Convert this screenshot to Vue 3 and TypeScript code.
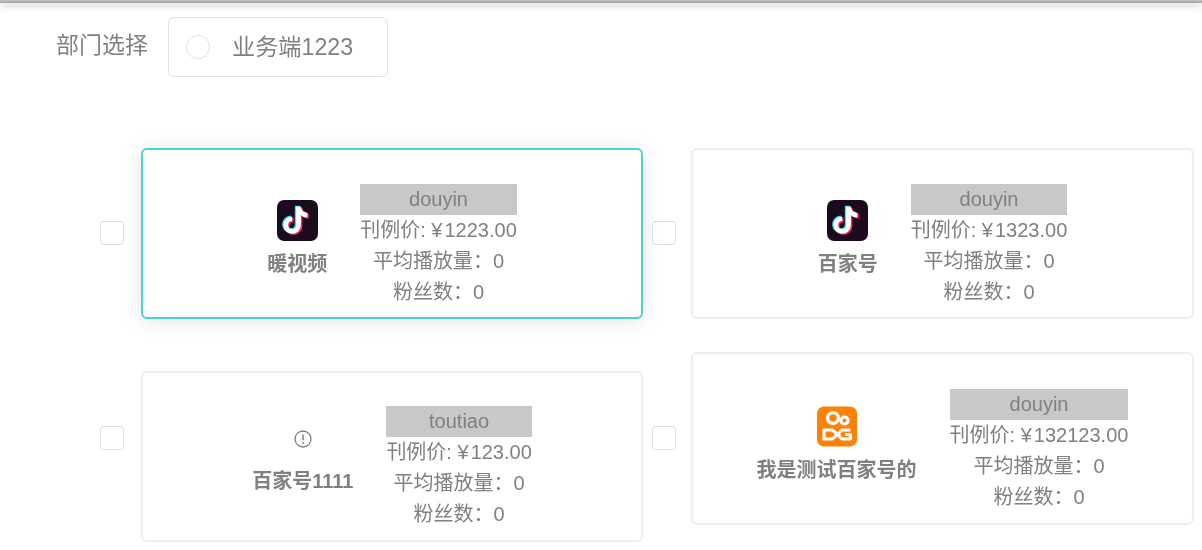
<script setup lang="ts">
interface Channel {
  id: number
  name: string
  platform: string
  price: string
  icon: 'tiktok' | 'kuaishou' | 'broken'
  selected?: boolean
}

const channels: Channel[] = [
  { id: 1, name: '暖视频', platform: 'douyin', price: '1223.00', icon: 'tiktok', selected: true },
  { id: 2, name: '百家号', platform: 'douyin', price: '1323.00', icon: 'tiktok' },
  { id: 3, name: '百家号1111', platform: 'toutiao', price: '123.00', icon: 'broken' },
  { id: 4, name: '我是测试百家号的', platform: 'douyin', price: '132123.00', icon: 'kuaishou' },
]
</script>

<template>
  <div class="page">
    <div class="topbar"></div>
    <div class="dept">
      <span class="dept-label">部门选择</span>
      <div class="dept-box">
        <span class="radio"></span>
        <span class="dept-name">业务端1223</span>
      </div>
    </div>
    <div class="grid">
      <div v-for="c in channels" :key="c.id" class="cell" :class="`cell-${c.id}`">
        <span class="check"></span>
        <div class="card" :class="{ selected: c.selected }">
          <div class="who">
            <div class="logo" :class="{ 'logo-broken': c.icon === 'broken' }">
              <svg v-if="c.icon === 'tiktok'" viewBox="0 0 40 40" width="41" height="41">
                <rect width="40" height="40" rx="7" fill="#1c0a1e" />
                <g fill="none" stroke-width="4.6">
                  <path d="M21 6.5v18a6.2 6.2 0 1 1-6.2-6.2M21 6.5c.4 4.6 3.8 8 8.6 8.4" stroke="#25f0ea" transform="translate(-1.3 -.8)" />
                  <path d="M21 6.5v18a6.2 6.2 0 1 1-6.2-6.2M21 6.5c.4 4.6 3.8 8 8.6 8.4" stroke="#fb2c55" transform="translate(1.4 1)" />
                  <path d="M21 6.5v18a6.2 6.2 0 1 1-6.2-6.2M21 6.5c.4 4.6 3.8 8 8.6 8.4" stroke="#fff" />
                </g>
              </svg>
              <svg v-else-if="c.icon === 'kuaishou'" viewBox="0 0 40 40" width="40" height="41">
                <rect width="40" height="40" rx="7" fill="#ff8105" />
                <g fill="none" stroke="#fff">
                  <circle cx="16" cy="11.5" r="5.4" stroke-width="3.4" />
                  <circle cx="27.5" cy="14" r="3.6" stroke-width="3" />
                  <path d="M7 23.5h8l4 3v3l-4 3H7z" stroke-width="3.2" stroke-linejoin="round" />
                  <path d="M33.5 23.5H25l-3 3v3l3 3h8.5V28H28" stroke-width="3" stroke-linejoin="round" />
                </g>
              </svg>
              <svg v-else viewBox="0 0 18 18" width="18" height="18">
                <circle cx="9" cy="9" r="8" fill="none" stroke="#808080" stroke-width="1.3" />
                <path d="M9 4.4v5.8M9 12v1.7" stroke="#808080" stroke-width="1.5" fill="none" />
              </svg>
            </div>
            <div class="name">{{ c.name }}</div>
          </div>
          <div class="info">
            <div class="platform">{{ c.platform }}</div>
            <div class="line">刊例价: <span class="yen">¥</span>{{ c.price }}</div>
            <div class="line">平均播放量：0</div>
            <div class="line">粉丝数：0</div>
          </div>
        </div>
      </div>
    </div>
  </div>
</template>

<style>
html, body { margin: 0; background: #fff; }
</style>

<style scoped>
.page {
  width: 1202px;
  height: 550px;
  overflow: hidden;
  position: relative;
  background: #fff;
  color: #808080;
  font-family: "Liberation Sans", "Noto Sans CJK SC", sans-serif;
  filter: blur(0.35px);
}
.topbar {
  height: 3px;
  background: linear-gradient(#c4c4c4, #a0a0a0);
  box-shadow: 0 2px 8px rgba(0, 0, 0, 0.3);
}
.dept {
  display: flex;
  align-items: flex-start;
  margin-top: 14px;
  padding-left: 56px;
}
.dept-label {
  width: 112px;
  font-size: 23px;
  line-height: 56px;
}
.dept-box {
  box-sizing: border-box;
  width: 220px;
  height: 60px;
  display: flex;
  align-items: center;
  padding-left: 17px;
  border: 1px solid #dfe2ee;
  border-radius: 6px;
}
.radio {
  box-sizing: border-box;
  width: 24px;
  height: 24px;
  border: 1px solid #dcdfee;
  border-radius: 50%;
}
.dept-name {
  margin-left: 22px;
  font-size: 23.2px;
  line-height: 60px;
}
.grid {
  display: grid;
  grid-template-columns: 543px 542px;
  column-gap: 9px;
  row-gap: 33px;
  margin-top: 71px;
  padding-left: 100px;
  align-items: start;
}
.cell {
  display: flex;
  align-items: flex-start;
  gap: 17px;
}
.cell-2, .cell-4 { gap: 15px; }
.cell-3 .card { margin-top: 19px; }
.check {
  box-sizing: border-box;
  flex: none;
  width: 24px;
  height: 24px;
  margin-top: 73px;
  border: 1px solid #dcdfee;
  border-radius: 3px;
}
.cell-3 .check, .cell-4 .check { margin-top: 74px; }
.card {
  box-sizing: border-box;
  flex: 1;
  height: 171px;
  display: flex;
  justify-content: center;
  align-items: flex-start;
  gap: 33px;
  padding-top: 34px;
  border: 2px solid #ebedf7;
  border-radius: 6px;
  background: #fff;
}
.cell-3 .card { padding-top: 33px; }
.cell-4 .card { height: 173px; padding-top: 35px; }
.card.selected {
  border-color: #4bd4cd;
  box-shadow: 0 2px 20px rgba(0, 0, 0, 0.11);
}
.who {
  display: flex;
  flex-direction: column;
  align-items: center;
  margin-top: 16px;
}
.cell-3 .who { margin-top: 0; }
.cell-4 .who { margin-top: 17px; }
.logo {
  height: 41px;
  display: flex;
  justify-content: center;
  align-items: center;
}
.logo-broken { height: 58px; margin-top: 0; align-items: flex-start; padding-top: 24px; box-sizing: border-box; }
.name {
  margin-top: 8px;
  font-size: 20px;
  font-weight: 700;
  line-height: 30px;
  white-space: nowrap;
}
.cell-3 .name { margin-top: 2px; }
.info {
  display: flex;
  flex-direction: column;
  align-items: stretch;
  text-align: center;
  font-size: 20px;
  line-height: 31px;
  white-space: nowrap;
}
.yen { margin-right: 2px; }
.platform {
  height: 31px;
  background: #c8c8c8;
}
</style>
